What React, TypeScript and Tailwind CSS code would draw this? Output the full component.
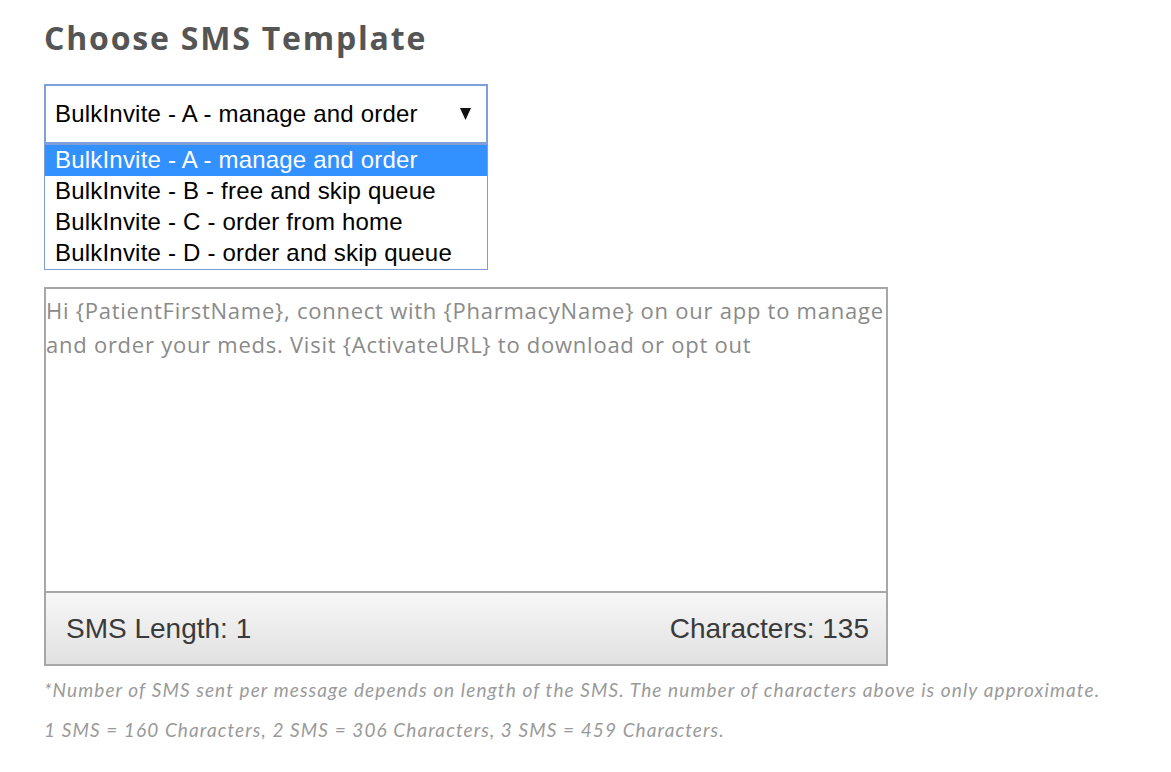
import React from "react";

const options = [
  "BulkInvite - A - manage and order",
  "BulkInvite - B - free and skip queue",
  "BulkInvite - C - order from home",
  "BulkInvite - D - order and skip queue",
];

const message =
  "Hi {PatientFirstName}, connect with {PharmacyName} on our app to manage and order your meds. Visit {ActivateURL} to download or opt out";

export default function App() {
  return (
    <div className="min-h-[772px] w-[1171px] bg-white pl-[44px] pt-[18px]">
      <h1
        className="text-[32px] font-bold leading-[40px] text-[#555555] tracking-[1.8px]"
        style={{ fontFamily: '"Open Sans", sans-serif' }}
      >
        Choose SMS Template
      </h1>

      <div
        className="mt-[26px] w-[444px] tracking-[0.2px]"
        style={{ fontFamily: '"Liberation Sans", Arial, sans-serif' }}
      >
        <div className="flex h-[60px] items-center justify-between border-2 border-[#7fa1da] bg-white pl-[9px] pr-[14px] text-[24px] text-black">
          <span>BulkInvite - A - manage and order</span>
          <svg width="11" height="12" viewBox="0 0 11 12" className="mr-[1px]">
            <path d="M0 0 H11 L5.5 12 Z" fill="#111" />
          </svg>
        </div>
        <div className="border border-[#7f9ed6] bg-white">
          {options.map((o, i) => (
            <div
              key={o}
              className={
                "h-[31px] pl-[10px] text-[24px] leading-[30px] " +
                (i === 0 ? "bg-[#3390ff] text-white" : "text-black")
              }
            >
              {o}
            </div>
          ))}
        </div>
      </div>

      <div className="mt-[17px] w-[844px] border-2 border-b-0 border-[#a7a7a7]">
        <div
          className="h-[302px] pt-[4px] text-[22px] leading-[34px] tracking-[0.75px] text-[#8a8a8a]"
          style={{ fontFamily: '"Open Sans", sans-serif' }}
        >
          {message}
        </div>
      </div>
      <div
        className="flex h-[75px] w-[844px] items-center justify-between border-2 border-[#a7a7a7] bg-gradient-to-b from-[#f7f7f7] to-[#e1e1e1] pl-[20px] pr-[17px] text-[28px] text-[#3a3a3a]"
        style={{ fontFamily: '"Liberation Sans", Arial, sans-serif' }}
      >
        <span>SMS Length: 1</span>
        <span>Characters: 135</span>
      </div>

      <div
        className="mt-[4px] text-[19px] italic leading-[40px] tracking-[1.1px] text-[#9a9a9a]"
        style={{ fontFamily: "Lato, sans-serif" }}
      >
        <p>*Number of SMS sent per message depends on length of the SMS. The number of characters above is only approximate.</p>
        <p>1 SMS = 160 Characters, 2 SMS = 306 Characters, 3 SMS = 459 Characters.</p>
      </div>
    </div>
  );
}
